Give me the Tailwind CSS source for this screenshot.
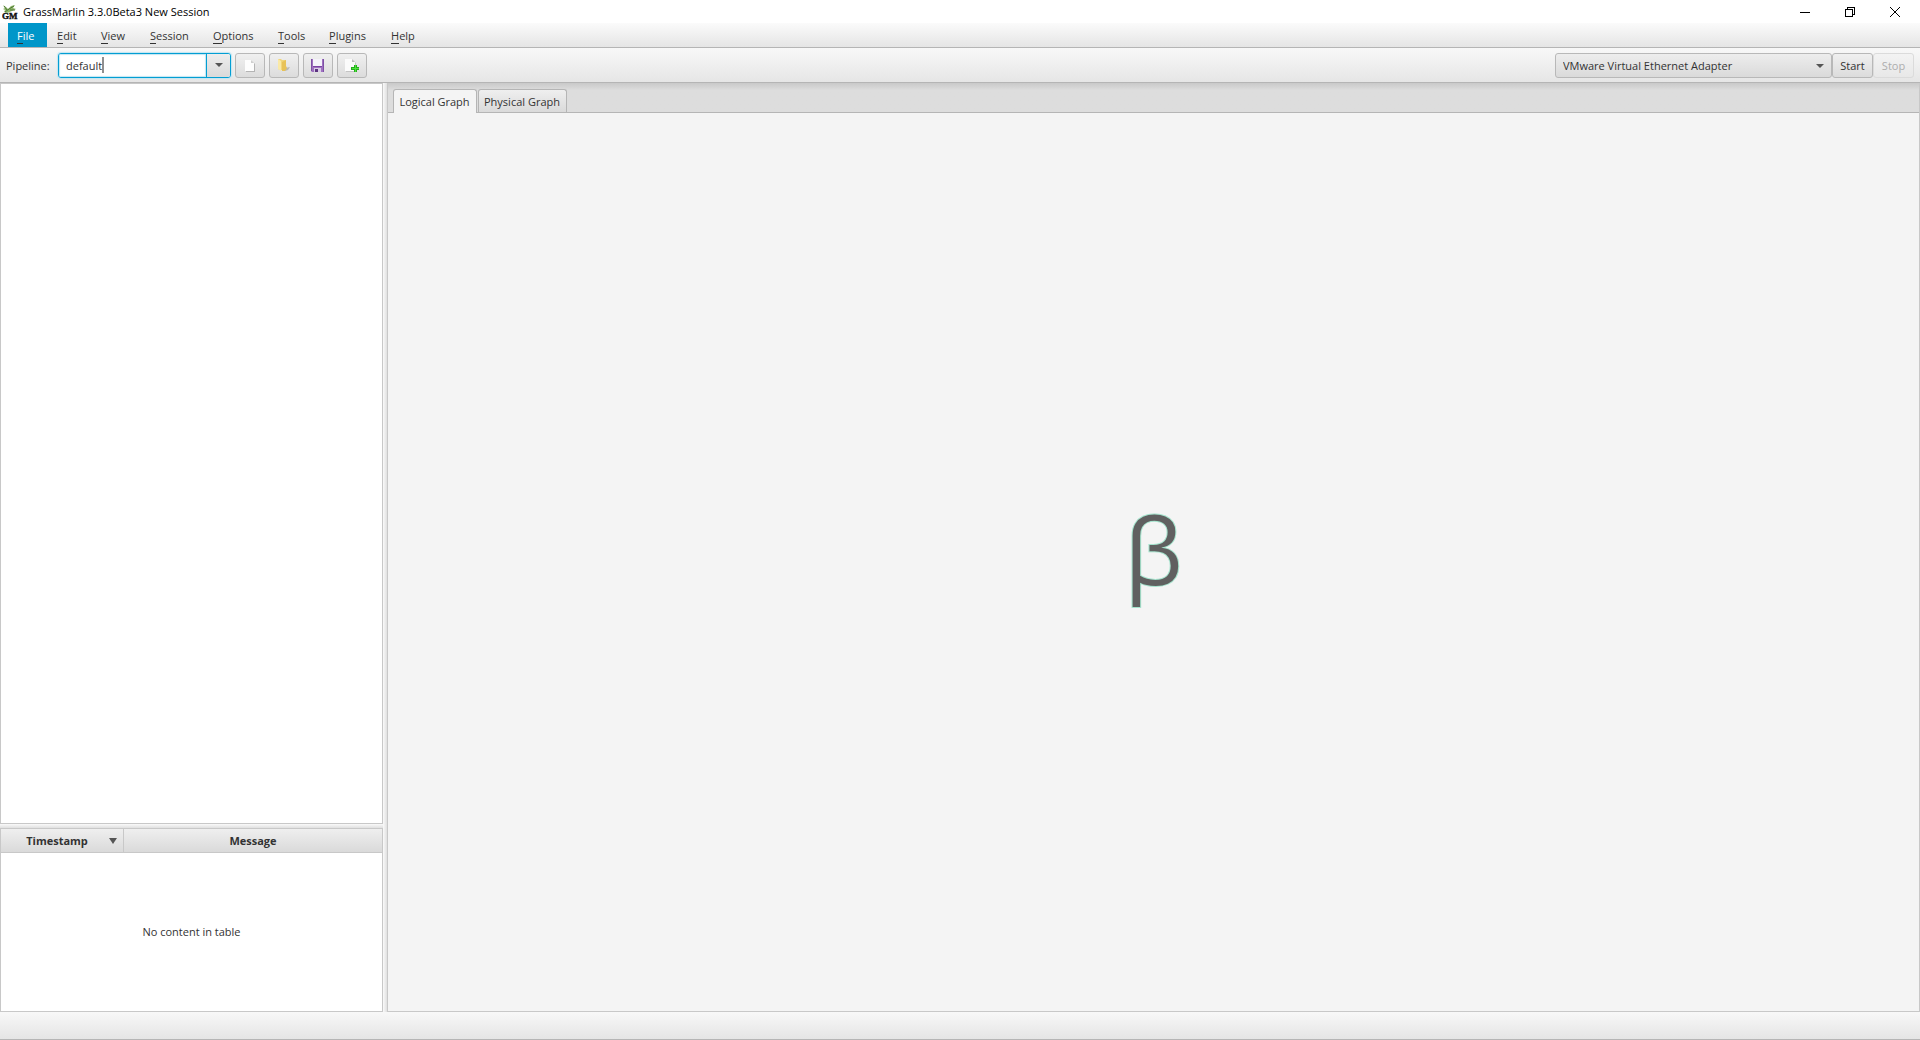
<!DOCTYPE html>
<html lang="en">
<head>
<meta charset="utf-8">
<title>GrassMarlin 3.3.0Beta3 New Session</title>
<script src="https://cdn.jsdelivr.net/npm/@tailwindcss/browser@4"></script>
</head>
<body class="flex h-screen flex-col overflow-hidden bg-[#f3f3f3] font-['Open_Sans','Noto_Sans',sans-serif] text-[11px] leading-4 text-[#333333]">

<!-- Title bar -->
<header class="flex h-[23px] shrink-0 items-center bg-white text-black">
  <svg class="ml-[2px] h-4 w-4" viewBox="0 0 16 16" aria-hidden="true">
    <path d="M1 1l3 2 2 2 3-3 4-1-2 3 3 1-4 2-5 2-3-1 1-2-2-1 2-1z" fill="#8fb56a"/>
    <path d="M3 8l4-3 5-3M5 6l-3-4M8 6l5 0" stroke="#4f7a35" stroke-width="1" fill="none"/>
    <text x="0" y="15" font-family="Liberation Serif, serif" font-size="9" font-weight="700" fill="#111" stroke="#111" stroke-width=".4">GM</text>
  </svg>
  <h1 class="ml-[5px]">GrassMarlin 3.3.0Beta3 New Session</h1>
  <div class="ml-auto flex h-[21px]">
    <button class="flex w-[45px] items-center justify-center" aria-label="Minimize">
      <svg class="h-3 w-3" viewBox="0 0 12 12" shape-rendering="crispEdges"><path d="M1 6.500h10" stroke="#000"/></svg>
    </button>
    <button class="flex w-[45px] items-center justify-center" aria-label="Restore">
      <svg class="h-3 w-3" viewBox="0 0 12 12" shape-rendering="crispEdges" fill="none" stroke="#000"><path d="M1.500 3.500h7v7h-7zM3.500 3v-1.500h7v7h-2"/></svg>
    </button>
    <button class="mr-[2px] flex w-[46px] items-center justify-center" aria-label="Close">
      <svg class="h-3 w-3" viewBox="0 0 12 12" stroke="#000" fill="none"><path d="M1 1l10 10M11 1L1 11"/></svg>
    </button>
  </div>
</header>

<!-- Menu bar -->
<nav class="flex h-[25px] shrink-0 border-b border-[#b5b5b5] bg-linear-to-b from-[#fbfbfb] to-[#e5e5e5] pl-2">
  <button class="w-[39px] bg-[#0096c9] pt-[2px] pl-[9px] text-left text-white"><span class="border-b border-[#333333]">F</span>ile</button>
  <button class="w-[45px] pt-[2px] pl-[10px] text-left"><span class="border-b border-[#333333]">E</span>dit</button>
  <button class="w-[49px] pt-[2px] pl-[9px] text-left"><span class="border-b border-[#333333]">V</span>iew</button>
  <button class="w-[63px] pt-[2px] pl-[9px] text-left"><span class="border-b border-[#333333]">S</span>ession</button>
  <button class="w-[65px] pt-[2px] pl-[9px] text-left"><span class="border-b border-[#333333]">O</span>ptions</button>
  <button class="w-[51px] pt-[2px] pl-[9px] text-left"><span class="border-b border-[#333333]">T</span>ools</button>
  <button class="w-[62px] pt-[2px] pl-[9px] text-left"><span class="border-b border-[#333333]">P</span>lugins</button>
  <button class="w-[45px] pt-[2px] pl-[9px] text-left"><span class="border-b border-[#333333]">H</span>elp</button>
</nav>

<!-- Tool bar -->
<div class="flex h-[35px] shrink-0 items-center border-b border-[#b5b5b5] bg-linear-to-b from-[#f8f8f8] to-[#e6e6e6] px-[6px]" role="toolbar">
  <label for="pipeline" class="w-[52px] pt-[2px]">Pipeline:</label>
  <div class="flex h-[25px] w-[173px] overflow-hidden rounded-[3px] border border-[#039ed3] bg-white shadow-[0_0_1px_1px_#c3e6f2]">
    <div class="flex flex-1 items-center pl-[7px] shadow-[inset_0_0_1px_1px_#c3e6f2]">
      <input id="pipeline" type="text" value="default" class="field-sizing-content pt-[2px] outline-none">
      <span class="h-4 w-[2px] bg-[#8f8f8f]"></span>
    </div>
    <button class="flex w-6 items-center justify-center border-l border-[#039ed3] bg-linear-to-b from-[#ededed] to-[#dadada]" aria-label="Show pipelines">
      <svg class="h-1 w-2" viewBox="0 0 8 4"><path d="M0 0h8l-4 4z" fill="#555"/></svg>
    </button>
  </div>
  <div class="ml-1 flex gap-1">
    <button class="flex h-[25px] w-[30px] items-center justify-center rounded-[3px] border border-[#b8b8b8] bg-linear-to-b from-[#f0f0f0] to-[#dcdcdc]" aria-label="New session">
      <svg class="h-4 w-4" viewBox="0 0 16 16"><path d="M4 4h6l3 3v8H4z" fill="#b4b4b4"/><path d="M3 3h6l3 3v8H3z" fill="#fdfdfd"/><path d="M9 3v3h3z" fill="#cfcfcf"/></svg>
    </button>
    <button class="flex h-[25px] w-[30px] items-center justify-center rounded-[3px] border border-[#b8b8b8] bg-linear-to-b from-[#f0f0f0] to-[#dcdcdc]" aria-label="Open session">
      <svg class="h-4 w-4" viewBox="0 0 16 16"><path d="M9 11l5-1-2 3-3 1z" fill="#b9b9b9"/><path d="M2 2h3l1 1h4v10H4l-2-1z" fill="#f0d57a"/><path d="M6 5l4-2v6l1 2-2 3H6z" fill="#e8c257"/><path d="M2 2l3 2v10l-3-2z" fill="#fae9a6"/></svg>
    </button>
    <button class="flex h-[25px] w-[30px] items-center justify-center rounded-[3px] border border-[#b8b8b8] bg-linear-to-b from-[#f0f0f0] to-[#dcdcdc]" aria-label="Save session">
      <svg class="h-4 w-4" viewBox="0 0 16 16"><path d="M1 2h13v13H2l-1-1z" fill="#9f70c0"/><path d="M1 2h1v12H1zM13 2h1v13h-1z" fill="#7d4fa5"/><path d="M3 2h9v7H3z" fill="#f4f2fa"/><path d="M3 9h9v1H3z" fill="#7a44a3"/><path d="M4 11h7v4H4z" fill="#d9cde6"/><path d="M5 12h3v3H5z" fill="#5c3480"/></svg>
    </button>
    <button class="flex h-[25px] w-[30px] items-center justify-center rounded-[3px] border border-[#b8b8b8] bg-linear-to-b from-[#f0f0f0] to-[#dcdcdc]" aria-label="Import files">
      <svg class="h-4 w-4" viewBox="0 0 16 16"><path d="M2 3h7l3 3v9H2z" fill="#c4c4c4"/><path d="M1 2h7l3 3v9H1z" fill="#fbfbfb"/><path d="M8 2v3h3z" fill="#bdbdbd"/><path d="M10 8h3v2h2v3h-2v2h-3v-2H7v-3h3z" fill="#25ad1e"/><path d="M11 8h1v3h3v1h-3v3h-1v-3H8v-1h3z" fill="#4ee33c"/></svg>
    </button>
  </div>
  <div class="ml-auto flex">
    <div class="relative w-[277px]">
      <select aria-label="Network adapter" class="h-[25px] w-full appearance-none rounded-[3px] border border-[#b8b8b8] bg-linear-to-b from-[#ededed] to-[#dadada] pt-px pl-[7px]">
        <option>VMware Virtual Ethernet Adapter</option>
      </select>
      <svg class="pointer-events-none absolute top-[11px] right-2 h-1 w-2" viewBox="0 0 8 4"><path d="M0 0h8l-4 4z" fill="#555"/></svg>
    </div>
    <button class="h-[25px] w-[41px] rounded-[3px] border border-[#b8b8b8] bg-linear-to-b from-[#f0f0f0] to-[#dcdcdc] pt-px">Start</button>
    <button disabled class="h-[25px] w-[41px] rounded-[3px] border border-[#dbdbdb] bg-linear-to-b from-[#f3f3f3] to-[#e8e8e8] pt-px text-[#adadad]">Stop</button>
  </div>
</div>

<main class="flex min-h-0 flex-1">
  <!-- Session tree and message log -->
  <aside class="flex w-[383px] shrink-0 flex-col">
    <section class="flex-1 border border-[#c8c8c8] bg-white" aria-label="Session tree"></section>
    <div class="h-1 bg-linear-to-b from-[#fafafa] to-[#e0e0e0]" role="separator"></div>
    <section class="flex h-[184px] flex-col border border-[#c8c8c8] bg-white">
      <table class="w-full table-fixed border-separate border-spacing-0">
        <thead>
          <tr class="h-6 bg-linear-to-b from-[#efefef] to-[#d9d9d9]">
            <th class="w-[123px] border-r border-b border-[#c8c8c8] p-0">
              <div class="flex items-center pr-[6px] pl-1">
                <span class="flex-1">Timestamp</span>
                <svg class="h-[6px] w-2" viewBox="0 0 8 6"><path d="M0 0h8l-4 6z" fill="#555"/></svg>
              </div>
            </th>
            <th class="border-b border-[#c8c8c8] p-0">Message</th>
          </tr>
        </thead>
      </table>
      <p class="flex flex-1 items-center justify-center">No content in table</p>
    </section>
  </aside>
  <div class="w-1 shrink-0 bg-linear-to-r from-[#fafafa] to-[#e0e0e0]" role="separator"></div>

  <!-- Graph views -->
  <section class="flex min-w-0 flex-1 flex-col border-x border-b border-[#c8c8c8]">
    <div class="h-[30px] shrink-0 border-b border-[#b5b5b5] bg-linear-to-b from-[#c9c9c9] to-[#dddddd] to-25% pt-[6px] pl-[5px]">
      <div class="flex gap-px" role="tablist">
        <button role="tab" aria-selected="true" class="h-6 w-[84px] rounded-t-[3px] border border-b-0 border-[#b5b5b5] bg-[#f4f4f4] pr-px">Logical Graph</button>
        <button role="tab" aria-selected="false" class="h-[23px] w-[89px] rounded-t-[3px] border border-b-0 border-[#b5b5b5] bg-linear-to-b from-[#efefef] to-[#dadada] pt-px pr-px">Physical Graph</button>
      </div>
    </div>
    <div class="flex flex-1 items-center justify-center bg-[#f4f4f4] pb-6" role="tabpanel">
      <span class="text-[92px] leading-none font-medium text-[#606060] [-webkit-text-stroke:2px_#a5e3cd] [paint-order:stroke_fill]">β</span>
    </div>
  </section>
</main>

<!-- Status bar -->
<footer class="h-7 shrink-0 border-b border-[#b5b5b5] bg-linear-to-b from-[#f8f8f8] to-[#e5e5e5]"></footer>
</body>
</html>
